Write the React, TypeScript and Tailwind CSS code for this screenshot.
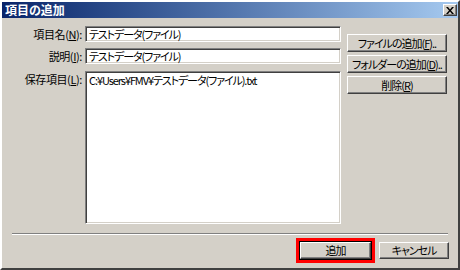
const font = "font-['MS_UI_Gothic','Noto_Sans_CJK_JP',sans-serif] [font-feature-settings:'palt'] tracking-[-0.4px]";

function Key({ k }: { k: string }) {
  return <span className="underline underline-offset-1">{k}</span>;
}

function Sunken({ className, children }: { className: string; children?: React.ReactNode }) {
  return (
    <div
      className={`whitespace-nowrap border border-t-[#808080] border-l-[#808080] border-b-white border-r-white bg-white tracking-[-1.1px] shadow-[inset_1px_1px_0_#404040,inset_-1px_-1px_0_#d4d0c8] ${className}`}
    >
      {children}
    </div>
  );
}

function Button({ children, className = "" }: { children: React.ReactNode; className?: string }) {
  return (
    <div
      className={`flex items-center justify-center whitespace-nowrap border border-t-white border-l-white border-b-[#404040] border-r-[#404040] bg-[#d4d0c8] text-[11px] leading-none tracking-[-1px] text-black shadow-[inset_-1px_-1px_0_#808080] ${className}`}
    >
      {children}
    </div>
  );
}

export default function App() {
  return (
    <div className={`flex h-[270px] w-[460px] flex-col border-2 border-t-white border-l-white border-b-[#404040] border-r-[#404040] bg-[#d4d0c8] text-black ${font}`}>
      <div className="flex h-[16px] items-center justify-between bg-gradient-to-r from-[#0a246a] to-[#a6caf0] pl-[3px] pr-px">
        <span className="text-[12px] font-bold leading-none tracking-normal text-white">項目の追加</span>
        <div className="flex h-[12px] w-[14px] items-center justify-center border border-t-white border-l-white border-b-[#404040] border-r-[#404040] bg-[#d4d0c8] shadow-[inset_-1px_-1px_0_#808080]">
          <svg width="8" height="7" viewBox="0 0 8 7">
            <path d="M0 0h2l2 2.5L6 0h2L5 3.5 8 7H6L4 4.5 2 7H0l3-3.5z" fill="#000" />
          </svg>
        </div>
      </div>

      <div className="mt-[8px] flex">
        <div className="grid grid-cols-[80px_256px] gap-x-[3px] text-[11px] leading-none">
          <div className="flex h-[16px] items-center justify-end whitespace-nowrap">
            項目名(<Key k="N" />):
          </div>
          <Sunken className="flex h-[16px] items-center pl-[3px]">テストデータ(ファイル)</Sunken>

          <div className="mt-[6px] flex h-[16px] items-center justify-end whitespace-nowrap">
            説明(<Key k="I" />):
          </div>
          <Sunken className="mt-[6px] flex h-[16px] items-center pl-[3px]">テストデータ(ファイル)</Sunken>

          <div className="mt-[7px] flex justify-end whitespace-nowrap pt-[3px]">
            保存項目(<Key k="L" />):
          </div>
          <Sunken className="mt-[7px] h-[153px] pl-[3px] pt-[3px]">C:¥Users¥FMV¥テストデータ(ファイル).txt</Sunken>
        </div>

        <div className="ml-[6px] mt-[8px] flex flex-col gap-[3px]">
          <Button className="h-[18px] w-[100px]">
            ファイルの追加(<Key k="F" />)..
          </Button>
          <Button className="h-[18px] w-[100px]">
            フォルダーの追加(<Key k="D" />)..
          </Button>
          <Button className="h-[18px] w-[100px]">
            削除(<Key k="R" />)
          </Button>
        </div>
      </div>

      <div className="ml-[10px] mr-[10px] mt-[9px] border-t border-b border-t-[#808080] border-b-white" />

      <div className="mr-[9px] mt-[3px] flex items-center justify-end gap-[4px]">
        <div className="border-[3px] border-[#ff0000] p-px">
          <Button className="h-[17px] w-[71px] outline outline-1 outline-black">追加</Button>
        </div>
        <Button className="h-[17px] w-[70px]">キャンセル</Button>
      </div>
    </div>
  );
}
